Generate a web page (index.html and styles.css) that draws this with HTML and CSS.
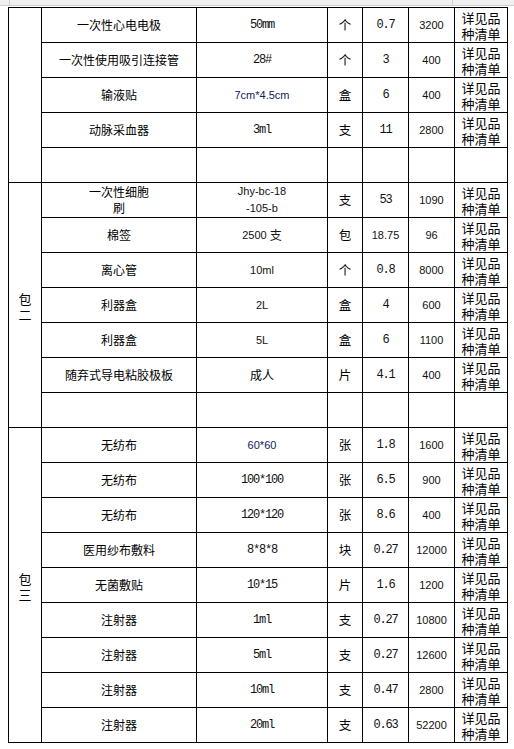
FILE: index.html
```html
<!DOCTYPE html>
<html lang="zh">
<head>
<meta charset="utf-8">
<title>耗材清单</title>
<link rel="stylesheet" href="styles.css">
</head>
<body>
<div class="ruler"><span class="tick tick-left"></span><span class="tick tick-right"></span></div>
<div class="sheet">
  <div class="c grp span5"></div>
  <div class="c name">一次性心电电极</div><div class="c mono">50mm</div><div class="c cjk">个</div><div class="c mono">0.7</div><div class="c sans">3200</div><div class="c note">详见品<br>种清单</div>
  <div class="c name">一次性使用吸引连接管</div><div class="c mono">28#</div><div class="c cjk">个</div><div class="c mono">3</div><div class="c sans">400</div><div class="c note">详见品<br>种清单</div>
  <div class="c name">输液贴</div><div class="c sans blue">7cm*4.5cm</div><div class="c cjk">盒</div><div class="c mono">6</div><div class="c sans">400</div><div class="c note">详见品<br>种清单</div>
  <div class="c name">动脉采血器</div><div class="c mono">3ml</div><div class="c cjk">支</div><div class="c mono">11</div><div class="c sans">2800</div><div class="c note">详见品<br>种清单</div>
  <div class="c"></div><div class="c"></div><div class="c"></div><div class="c"></div><div class="c"></div><div class="c"></div>

  <div class="c grp span7">包<br>二</div>
  <div class="c name">一次性细胞<br>刷</div><div class="c sans lines">Jhy-bc-18<br>-105-b</div><div class="c cjk">支</div><div class="c mono">53</div><div class="c sans">1090</div><div class="c note">详见品<br>种清单</div>
  <div class="c name">棉签</div><div class="c sans">2500&nbsp;<span class="cjk-in">支</span></div><div class="c cjk">包</div><div class="c sans">18.75</div><div class="c sans">96</div><div class="c note">详见品<br>种清单</div>
  <div class="c name">离心管</div><div class="c sans">10ml</div><div class="c cjk">个</div><div class="c mono">0.8</div><div class="c sans">8000</div><div class="c note">详见品<br>种清单</div>
  <div class="c name">利器盒</div><div class="c sans">2L</div><div class="c cjk">盒</div><div class="c mono">4</div><div class="c sans">600</div><div class="c note">详见品<br>种清单</div>
  <div class="c name">利器盒</div><div class="c sans">5L</div><div class="c cjk">盒</div><div class="c mono">6</div><div class="c sans">1100</div><div class="c note">详见品<br>种清单</div>
  <div class="c name">随弃式导电粘胶极板</div><div class="c name">成人</div><div class="c cjk">片</div><div class="c mono">4.1</div><div class="c sans">400</div><div class="c note">详见品<br>种清单</div>
  <div class="c"></div><div class="c"></div><div class="c"></div><div class="c"></div><div class="c"></div><div class="c"></div>

  <div class="c grp span9">包<br>三</div>
  <div class="c name">无纺布</div><div class="c sans blue">60*60</div><div class="c cjk">张</div><div class="c mono">1.8</div><div class="c sans">1600</div><div class="c note">详见品<br>种清单</div>
  <div class="c name">无纺布</div><div class="c mono">100*100</div><div class="c cjk">张</div><div class="c mono">6.5</div><div class="c sans">900</div><div class="c note">详见品<br>种清单</div>
  <div class="c name">无纺布</div><div class="c mono">120*120</div><div class="c cjk">张</div><div class="c mono">8.6</div><div class="c sans">400</div><div class="c note">详见品<br>种清单</div>
  <div class="c name">医用纱布敷料</div><div class="c mono">8*8*8</div><div class="c cjk">块</div><div class="c mono">0.27</div><div class="c sans">12000</div><div class="c note">详见品<br>种清单</div>
  <div class="c name">无菌敷贴</div><div class="c mono">10*15</div><div class="c cjk">片</div><div class="c mono">1.6</div><div class="c sans">1200</div><div class="c note">详见品<br>种清单</div>
  <div class="c name">注射器</div><div class="c mono">1ml</div><div class="c cjk">支</div><div class="c mono">0.27</div><div class="c sans">10800</div><div class="c note">详见品<br>种清单</div>
  <div class="c name">注射器</div><div class="c mono">5ml</div><div class="c cjk">支</div><div class="c mono">0.27</div><div class="c sans">12600</div><div class="c note">详见品<br>种清单</div>
  <div class="c name">注射器</div><div class="c mono">10ml</div><div class="c cjk">支</div><div class="c mono">0.47</div><div class="c sans">2800</div><div class="c note">详见品<br>种清单</div>
  <div class="c name">注射器</div><div class="c mono">20ml</div><div class="c cjk">支</div><div class="c mono">0.63</div><div class="c sans">52200</div><div class="c note">详见品<br>种清单</div>
</div>
</body>
</html>
```
FILE: styles.css
```css
html, body {
  margin: 0;
  padding: 0;
  background: #ffffff;
}
body {
  font-family: "Noto Sans CJK SC", "Liberation Sans", sans-serif;
  color: #000;
}
.ruler {
  position: relative;
  height: 5px;
  background: #f0f0f0;
  border-bottom: 1px solid #cfcfcf;
}
.tick {
  position: absolute;
  top: 0;
  width: 1px;
  height: 5px;
  background: #cfcfcf;
}
.tick-left { left: 9px; }
.tick-right { left: 452px; }

.sheet {
  box-sizing: border-box;
  width: 500px;
  margin: 1px 0 0 8px;
  display: grid;
  grid-template-columns: 33px 155px 131px 35px 46px 46px 53px;
  grid-auto-rows: 35px;
  border-left: 1px solid #000;
  border-top: 1px solid #000;
}
.c {
  box-sizing: border-box;
  border-right: 1px solid #000;
  border-bottom: 1px solid #000;
  display: flex;
  align-items: center;
  justify-content: center;
  text-align: center;
  overflow: hidden;
}
.span5 { grid-row: span 5; }
.span7 { grid-row: span 7; }
.span9 { grid-row: span 9; }
.grp {
  font-size: 13px;
  line-height: 16px;
  padding-top: 3px;
}
.name, .cjk {
  font-family: "Noto Sans CJK SC", sans-serif;
  font-size: 12px;
  line-height: 16px;
}
.cjk {
  font-size: 12.5px;
}
.note {
  font-family: "Noto Sans CJK SC", sans-serif;
  font-size: 13px;
  line-height: 16px;
  padding-top: 1px;
}
.mono {
  font-family: "Liberation Mono", "DejaVu Sans Mono", monospace;
  font-size: 12px;
  letter-spacing: -1.2px;
  line-height: 16px;
  color: #111;
}
.sans {
  font-family: "Liberation Sans", "DejaVu Sans", sans-serif;
  font-size: 11px;
  line-height: 16px;
  color: #111;
}
.lines {
  line-height: 17px;
}
.blue {
  color: #10205a;
}
.cjk-in {
  font-family: "Noto Sans CJK SC", sans-serif;
  font-size: 12px;
}
```
